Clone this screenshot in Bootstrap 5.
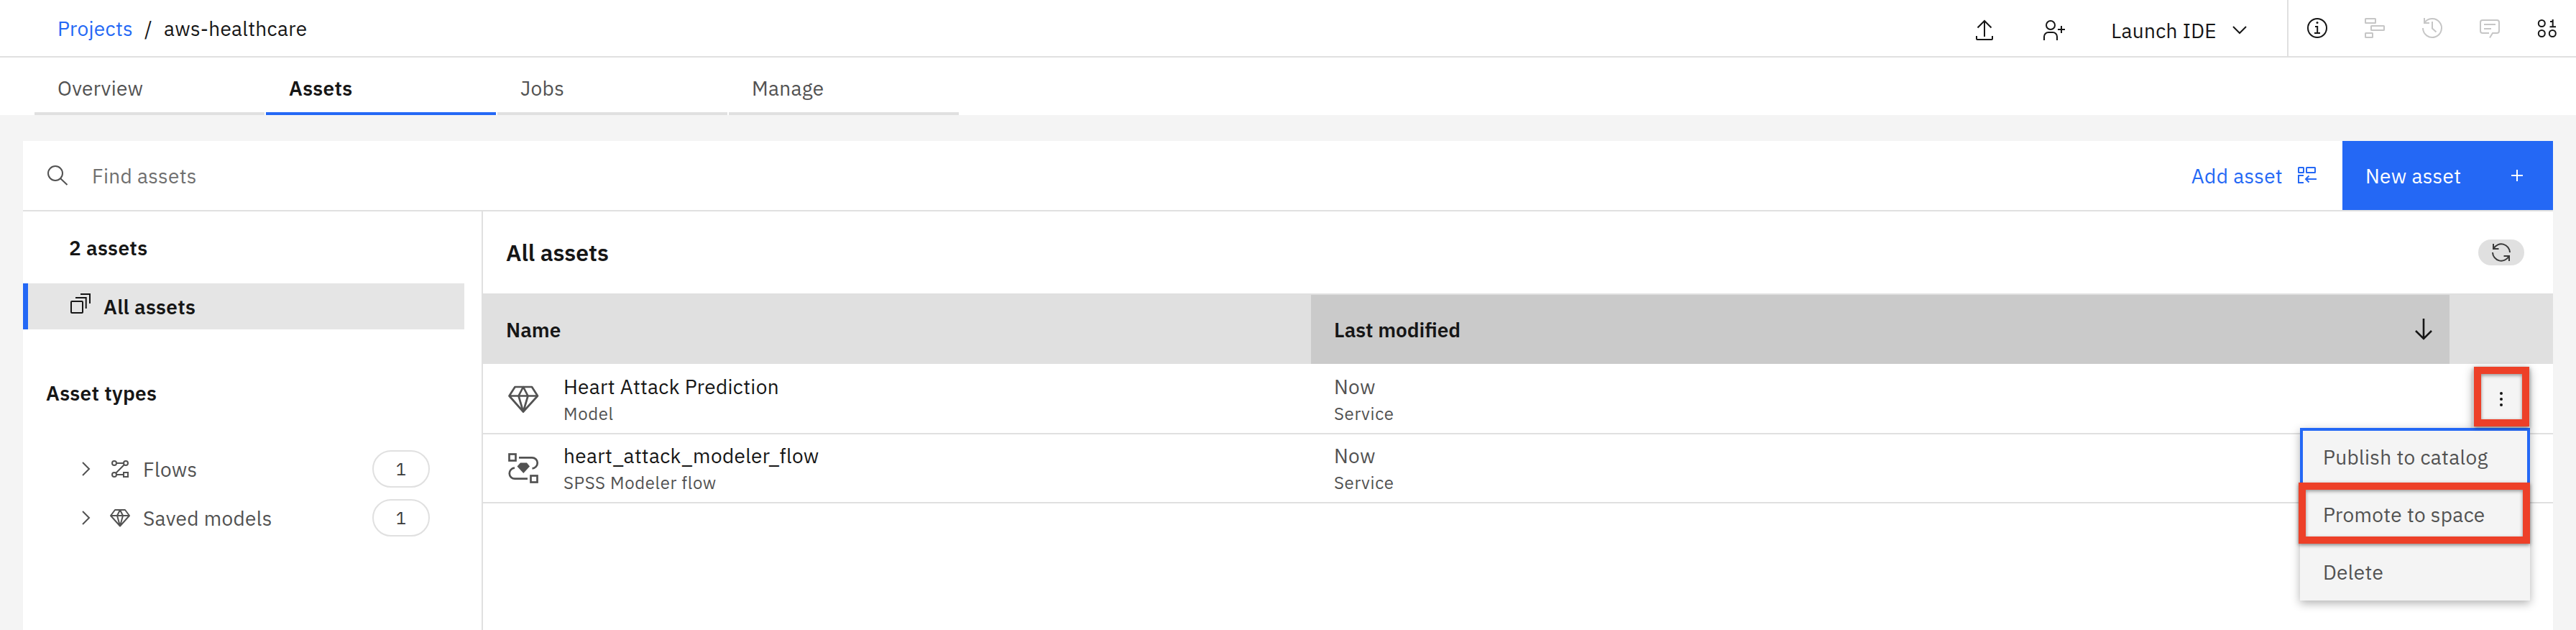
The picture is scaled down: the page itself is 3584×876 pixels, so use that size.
<!DOCTYPE html>
<html lang="en">
<head>
<meta charset="utf-8">
<meta name="viewport" content="width=device-width, initial-scale=1">
<title>aws-healthcare</title>
<link rel="stylesheet" href="https://cdn.jsdelivr.net/npm/bootstrap@5.3.0/dist/css/bootstrap.min.css">
<style>
  body { height: 876px; overflow: hidden; background: #f4f4f4; color: #161616; font: 28px/36px "IBM Plex Sans", Roboto, "Liberation Sans", sans-serif; letter-spacing: .32px; white-space: nowrap; }
  svg { display: block; flex: none; fill: none; stroke: currentColor; stroke-width: 2; overflow: visible; }
  a { text-decoration: none; color: inherit; }
  .blue { color: #2468f5; }
  .grey-text { color: #525252; }
  .semi { font-weight: 600; }
  .drop { padding-top: 1px; }
  .sub { font-size: 24px; color: #525252; letter-spacing: .64px; margin-top: 1px; }
  .topbar { height: 80px; border-bottom: 2px solid #e0e0e0; }
  .crumbs { padding: 1px 0 0 80px; }
  .tools { gap: 64px; padding: 6px 50px 0 0; }
  .launch { padding-top: 1px; }
  .utilities { width: 402px; border-left: 2px solid #e0e0e0; padding-left: 24px; gap: 48px; }
  .off { color: #c6c6c6; }
  .tabs { height: 80px; padding-left: 48px; gap: 2px; }
  .tabs a { width: 320px; border-bottom: 4px solid #e0e0e0; padding: 25px 0 0 32px; color: #525252; }
  .tabs a.active { border-color: #2468f5; color: #161616; }
  .panel { margin: 36px 32px 0; height: 680px; overflow: hidden; }
  .toolbar { height: 98px; border-bottom: 2px solid #e0e0e0; }
  .search { padding: 0 0 0 33px; gap: 31px; color: #6f6f6f; }
  .add { gap: 18px; margin-right: 33px; }
  .new { width: 293px; height: 96px; background: #2468f5; padding: 0 34px 0 32px; }
  .side { width: 640px; border-right: 2px solid #e0e0e0; }
  .count { height: 100px; padding: 33px 0 0 64px; }
  .current { width: 614px; height: 64px; background: #e5e5e5; border-left: 7px solid #2468f5; padding-left: 58px; gap: 17px; }
  .types { padding: 71px 0 0 32px; height: 160px; }
  .type { height: 68px; padding: 0 72px 0 78px; color: #525252; }
  .type svg + svg { margin: 0 19px 0 24px; }
  .pill { width: 80px; height: 52px; border: 2px solid #e0e0e0; border-radius: 26px; font-size: 24px; line-height: 48px; color: #393939; text-align: center; }
  .head { height: 114px; padding: 0 40px 0 32px; }
  .head h1 { font-size: 32px; line-height: 40px; letter-spacing: 0; }
  .refresh { width: 64px; height: 36px; border-radius: 18px; background: #e0e0e0; color: #393939; }
  .thead-row { height: 98px; background: #e0e0e0; padding-top: 2px; letter-spacing: 0; }
  .thead-row span { padding-top: 2px; }
  .thead-row svg { stroke-width: 2.6; }
  .c1 { width: 1152px; padding-left: 32px; }
  .c2 { width: 1584px; padding-left: 32px; }
  .sorted { background: #cacaca; padding-right: 20px; }
  .item { height: 96px; border-bottom: 2px solid #e0e0e0; }
  .item.first { height: 98px; padding-top: 2px; }
  .item .c1 { gap: 32px; }
  .item .c1 svg { stroke-width: 2.7; margin-top: 23px; }
  .txt { padding-top: 12px; }
  .act { left: 2768px; top: 4px; width: 80px; height: 85px; background: #f4f4f4; box-shadow: 0 4px 12px rgba(0,0,0,.3); }
  .act svg { margin: 29px 0 0 24px; fill: currentColor; stroke: none; }
  .menu { left: 2528px; top: 89px; width: 320px; height: 240px; background: #f4f4f4; box-shadow: 0 4px 12px rgba(0,0,0,.3); color: #525252; z-index: 2; }
  .menu div { height: 80px; padding: 23px 0 0 32px; }
  .menu .focused { border: 4px solid #2468f5; padding: 19px 0 0 28px; }
  .ring { border: 10px solid #ed4028; box-shadow: 0 2px 5px rgba(0,0,0,.45), inset 0 2px 5px rgba(0,0,0,.4); z-index: 3; }
  .ring-a { left: 2770px; top: 4px; width: 77px; height: 83px; }
  .ring-b { left: 2526px; top: 165px; width: 322px; height: 85px; }
</style>
</head>
<body>
<header class="topbar bg-white d-flex">
  <nav class="crumbs d-flex align-items-center flex-grow-1"><a class="blue" href="#">Projects</a><span class="px-3">/</span><span>aws-healthcare</span></nav>
  <div class="tools d-flex align-items-center">
    <svg width="32" height="32"><path d="M16 25V3M6.500 12.500 16 3l9.500 9.500M5 24v4a1 1 0 0 0 1 1h20a1 1 0 0 0 1-1v-4"/></svg>
    <svg width="32" height="32"><circle cx="12" cy="9" r="6"/><path d="M3 30v-5a6 6 0 0 1 6-6h6a6 6 0 0 1 6 6v5M22 15h10M27 10v10"/></svg>
    <div class="d-flex align-items-center"><span class="launch">Launch IDE</span><svg class="ms-3" width="32" height="32"><path d="m7 11 9 9 9-9"/></svg></div>
  </div>
  <div class="utilities d-flex align-items-center">
    <svg width="32" height="32"><circle cx="16" cy="16" r="13"/><path d="M13 14h3.200v9M12 23h8"/><circle cx="16" cy="8.500" r="1.500" fill="currentColor" stroke="none"/></svg>
    <svg class="off" width="32" height="32"><rect x="3" y="3" width="14" height="6" rx=".5"/><rect x="11" y="13" width="18" height="6" rx=".5"/><rect x="3" y="23" width="10" height="6" rx=".5"/></svg>
    <svg class="off" width="32" height="32"><path d="M3 16A13 13 0 1 0 5 9M5 2v7h7M16 7v9.500l5.500 5"/></svg>
    <svg class="off" width="32" height="32"><path d="M15 23H6a3 3 0 0 1-3-3V8a3 3 0 0 1 3-3h20a3 3 0 0 1 3 3v12a3 3 0 0 1-3 3h-6l-4 6.500M8 11h16M8 17h10"/></svg>
    <svg width="32" height="32"><circle cx="8.300" cy="9.500" r="4.500"/><circle cx="8.300" cy="23.500" r="4.500"/><circle cx="23.300" cy="23.500" r="4.500"/><path d="M20 7h3.500M19.500 14.200h8.500M23.700 4v10"/></svg>
  </div>
</header>
<nav class="tabs bg-white d-flex">
  <a href="#">Overview</a><a class="active semi" href="#">Assets</a><a href="#">Jobs</a><a href="#">Manage</a>
</nav>
<main class="panel bg-white d-flex flex-column">
  <div class="toolbar d-flex align-items-center flex-shrink-0">
    <div class="search d-flex align-items-center flex-grow-1"><svg width="32" height="32" class="grey-text"><circle cx="12" cy="13" r="10"/><path d="m19 20 9.500 9"/></svg><span class="drop">Find assets</span></div>
    <a class="add blue d-flex align-items-center" href="#"><span class="drop">Add asset</span><svg width="32" height="32"><rect x="4" y="5" width="7" height="7" rx=".5"/><rect x="15" y="5" width="12" height="7" rx=".5"/><path d="M11 16H4v10h7M29 21H14M18.500 16.500 14 21l4.500 4.500"/></svg></a>
    <a class="new text-white d-flex align-items-center justify-content-between" href="#"><span class="drop">New asset</span><svg width="32" height="32"><path d="M8 16h16M16 8v16"/></svg></a>
  </div>
  <div class="d-flex flex-grow-1">
    <aside class="side flex-shrink-0">
      <div class="count semi">2 assets</div>
      <div class="current semi d-flex align-items-center"><svg width="30" height="30" viewBox="0 3 30 30"><rect x="2" y="11" width="16" height="16" rx="1"/><path d="M8 6h14.700v15M15 1h13v13"/></svg><span class="drop">All assets</span></div>
      <div class="types semi">Asset types</div>
      <div class="type d-flex align-items-center">
        <svg width="20" height="24"><path d="m5 3 9 9-9 9"/></svg>
        <svg width="26" height="26"><circle cx="5" cy="5" r="3"/><circle cx="21" cy="5" r="3"/><circle cx="5" cy="21" r="3"/><path d="M8 5h10M19 7 7 19M8 21h10"/><rect x="18" y="18" width="6" height="6"/></svg>
        <span class="drop flex-grow-1">Flows</span><span class="pill">1</span>
      </div>
      <div class="type d-flex align-items-center">
        <svg width="20" height="24"><path d="m5 3 9 9-9 9"/></svg>
        <svg width="26" height="26"><path d="M6 2h14l6 8-13 14.500L0 10zM0 10h26M13 2 9 10l4 14.500 4-14.500z" stroke-linejoin="round"/></svg>
        <span class="drop flex-grow-1">Saved models</span><span class="pill">1</span>
      </div>
    </aside>
    <section class="flex-grow-1">
      <div class="head d-flex align-items-center justify-content-between"><h1 class="semi m-0">All assets</h1>
        <div class="refresh d-flex align-items-center justify-content-center"><svg width="32" height="32"><path d="M28 16A12 12 0 0 0 5.500 10.500M5 4v7h7.500M4 16a12 12 0 0 0 22.500 5.500M27 28v-7h-7.500"/></svg></div>
      </div>
      <div class="thead-row semi d-flex">
        <div class="c1 d-flex align-items-center"><span>Name</span></div>
        <div class="c2 sorted d-flex align-items-center justify-content-between"><span>Last modified</span><svg width="32" height="32"><path d="M16 1v28M5 18l11 11 11-11"/></svg></div>
      </div>
      <div class="position-relative">
        <div class="item first d-flex">
          <div class="c1 d-flex"><svg class="grey-text" width="48" height="48"><path d="M12.500 7h23.500l8 12.500L24 41.500 4.500 19.500zM4 19.500h40M24 7l-6.500 12.500L24 41.500l6.500-22z" stroke-linejoin="round"/></svg><div class="txt"><div>Heart Attack Prediction</div><div class="sub">Model</div></div></div>
          <div class="c2 txt grey-text"><div>Now</div><div class="sub">Service</div></div>
        </div>
        <div class="item d-flex">
          <div class="c1 d-flex"><svg class="grey-text" width="48" height="48"><rect x="4.500" y="4.500" width="9" height="9"/><rect x="34.500" y="34.500" width="9" height="9"/><path d="M18 9.300h18a7.500 7.500 0 0 1 .5 15M12 23.700a7.500 7.500 0 0 0 .5 15H30"/><path d="M20 16.500h9l4 5-8.700 9.500-8.800-9.500z" fill="currentColor" stroke="none"/></svg><div class="txt"><div>heart_attack_modeler_flow</div><div class="sub">SPSS Modeler flow</div></div></div>
          <div class="c2 txt grey-text"><div>Now</div><div class="sub">Service</div></div>
        </div>
        <div class="act position-absolute"><svg width="32" height="32"><circle cx="16" cy="8" r="2"/><circle cx="16" cy="16" r="2"/><circle cx="16" cy="24" r="2"/></svg></div>
        <div class="menu position-absolute"><div class="focused">Publish to catalog</div><div>Promote to space</div><div>Delete</div></div>
        <div class="ring ring-a position-absolute"></div>
        <div class="ring ring-b position-absolute"></div>
      </div>
    </section>
  </div>
</main>
<script src="https://cdn.jsdelivr.net/npm/bootstrap@5.3.0/dist/js/bootstrap.bundle.min.js"></script>
</body>
</html>
